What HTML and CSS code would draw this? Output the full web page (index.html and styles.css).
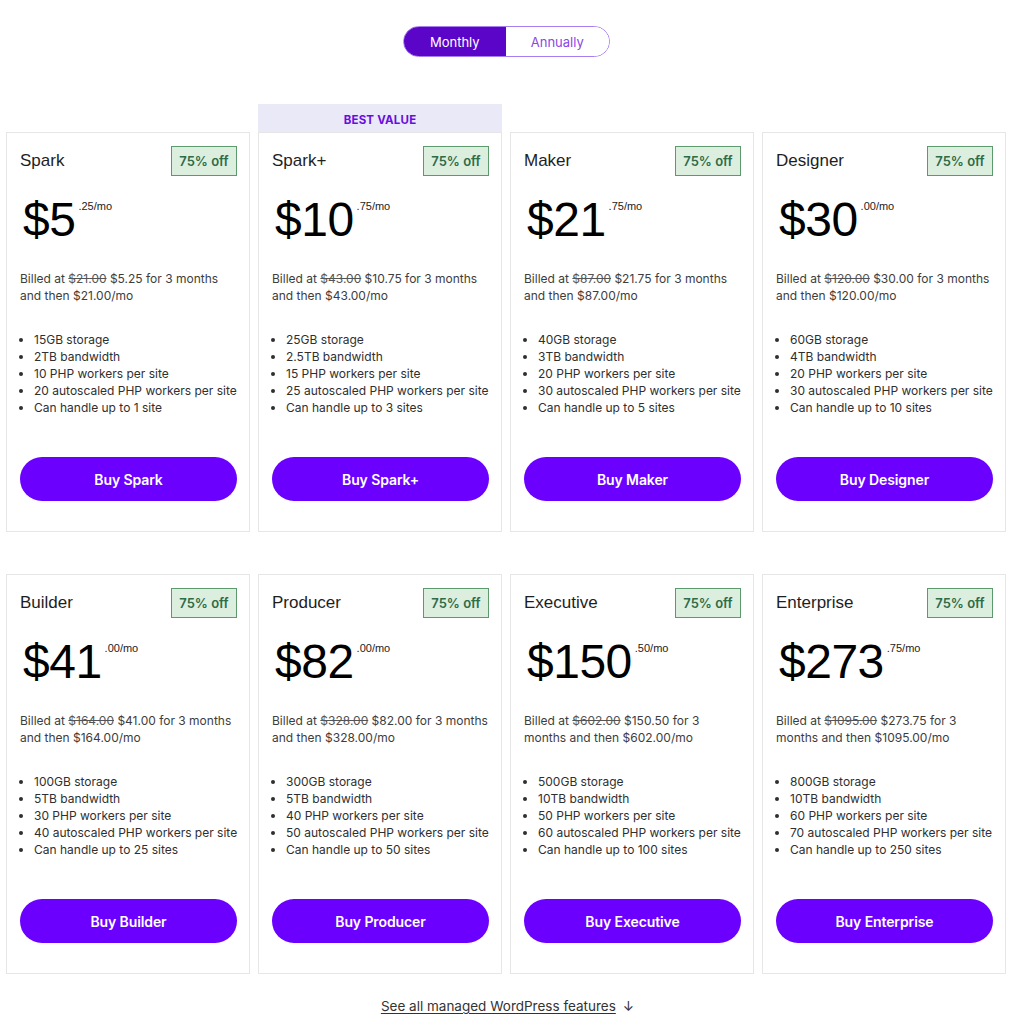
FILE: index.html
```html
<!DOCTYPE html>
<html lang="en">
<head>
<meta charset="utf-8">
<title>Plans</title>
<link rel="stylesheet" href="styles.css">
</head>
<body>
<div class="page">
  <div class="toggle-wrap">
    <div class="toggle">
      <button class="toggle-opt is-active">Monthly</button>
      <button class="toggle-opt">Annually</button>
    </div>
  </div>

  <div class="plans">
    <div class="plan">
      <div class="card">
        <div class="card-head"><h3 class="plan-name">Spark</h3><span class="badge">75% off</span></div>
        <div class="price"><span class="price-main">$5</span><span class="price-sup">.25/mo</span></div>
        <p class="billed">Billed at <s>$21.00</s> $5.25 for 3 months and then $21.00/mo</p>
        <ul class="features"><li>15GB storage</li><li>2TB bandwidth</li><li>10 PHP workers per site</li><li>20 autoscaled PHP workers per site</li><li>Can handle up to 1 site</li></ul>
        <button class="buy">Buy Spark</button>
      </div>
    </div>
    <div class="plan">
      <div class="best">BEST VALUE</div>
      <div class="card">
        <div class="card-head"><h3 class="plan-name">Spark+</h3><span class="badge">75% off</span></div>
        <div class="price"><span class="price-main">$10</span><span class="price-sup">.75/mo</span></div>
        <p class="billed">Billed at <s>$43.00</s> $10.75 for 3 months and then $43.00/mo</p>
        <ul class="features"><li>25GB storage</li><li>2.5TB bandwidth</li><li>15 PHP workers per site</li><li>25 autoscaled PHP workers per site</li><li>Can handle up to 3 sites</li></ul>
        <button class="buy">Buy Spark+</button>
      </div>
    </div>
    <div class="plan">
      <div class="card">
        <div class="card-head"><h3 class="plan-name">Maker</h3><span class="badge">75% off</span></div>
        <div class="price"><span class="price-main">$21</span><span class="price-sup">.75/mo</span></div>
        <p class="billed">Billed at <s>$87.00</s> $21.75 for 3 months and then $87.00/mo</p>
        <ul class="features"><li>40GB storage</li><li>3TB bandwidth</li><li>20 PHP workers per site</li><li>30 autoscaled PHP workers per site</li><li>Can handle up to 5 sites</li></ul>
        <button class="buy">Buy Maker</button>
      </div>
    </div>
    <div class="plan">
      <div class="card">
        <div class="card-head"><h3 class="plan-name">Designer</h3><span class="badge">75% off</span></div>
        <div class="price"><span class="price-main">$30</span><span class="price-sup">.00/mo</span></div>
        <p class="billed">Billed at <s>$120.00</s> $30.00 for 3 months and then $120.00/mo</p>
        <ul class="features"><li>60GB storage</li><li>4TB bandwidth</li><li>20 PHP workers per site</li><li>30 autoscaled PHP workers per site</li><li>Can handle up to 10 sites</li></ul>
        <button class="buy">Buy Designer</button>
      </div>
    </div>
    <div class="plan">
      <div class="card">
        <div class="card-head"><h3 class="plan-name">Builder</h3><span class="badge">75% off</span></div>
        <div class="price"><span class="price-main">$41</span><span class="price-sup">.00/mo</span></div>
        <p class="billed">Billed at <s>$164.00</s> $41.00 for 3 months and then $164.00/mo</p>
        <ul class="features"><li>100GB storage</li><li>5TB bandwidth</li><li>30 PHP workers per site</li><li>40 autoscaled PHP workers per site</li><li>Can handle up to 25 sites</li></ul>
        <button class="buy">Buy Builder</button>
      </div>
    </div>
    <div class="plan">
      <div class="card">
        <div class="card-head"><h3 class="plan-name">Producer</h3><span class="badge">75% off</span></div>
        <div class="price"><span class="price-main">$82</span><span class="price-sup">.00/mo</span></div>
        <p class="billed">Billed at <s>$328.00</s> $82.00 for 3 months and then $328.00/mo</p>
        <ul class="features"><li>300GB storage</li><li>5TB bandwidth</li><li>40 PHP workers per site</li><li>50 autoscaled PHP workers per site</li><li>Can handle up to 50 sites</li></ul>
        <button class="buy">Buy Producer</button>
      </div>
    </div>
    <div class="plan">
      <div class="card">
        <div class="card-head"><h3 class="plan-name">Executive</h3><span class="badge">75% off</span></div>
        <div class="price"><span class="price-main">$150</span><span class="price-sup">.50/mo</span></div>
        <p class="billed">Billed at <s>$602.00</s> $150.50 for 3 months and then $602.00/mo</p>
        <ul class="features"><li>500GB storage</li><li>10TB bandwidth</li><li>50 PHP workers per site</li><li>60 autoscaled PHP workers per site</li><li>Can handle up to 100 sites</li></ul>
        <button class="buy">Buy Executive</button>
      </div>
    </div>
    <div class="plan">
      <div class="card">
        <div class="card-head"><h3 class="plan-name">Enterprise</h3><span class="badge">75% off</span></div>
        <div class="price"><span class="price-main">$273</span><span class="price-sup">.75/mo</span></div>
        <p class="billed">Billed at <s>$1095.00</s> $273.75 for 3 months and then $1095.00/mo</p>
        <ul class="features"><li>800GB storage</li><li>10TB bandwidth</li><li>60 PHP workers per site</li><li>70 autoscaled PHP workers per site</li><li>Can handle up to 250 sites</li></ul>
        <button class="buy">Buy Enterprise</button>
      </div>
    </div>
  </div>

  <div class="more">
    <a class="more-link" href="#">See all managed WordPress features</a><span class="arrow">↓</span>
  </div>
</div>
</body>
</html>
```

FILE: styles.css
```css
* { box-sizing: border-box; }

body {
  margin: 0;
  background: #ffffff;
  font-family: Inter, "Noto Sans", sans-serif;
  color: #2c2c2c;
}

.page {
  padding: 26px 0 0 6px;
  width: 1015px;
}

.toggle-wrap {
  display: flex;
  justify-content: center;
  padding-right: 6px;
}

.toggle {
  display: flex;
  width: 207px;
  height: 31px;
  border: 1px solid #a77ef0;
  border-radius: 16px;
  overflow: hidden;
  margin-left: -3px;
}

.toggle-opt {
  flex: 1;
  border: 0;
  margin: 0;
  padding: 0;
  background: #ffffff;
  color: #8a48e6;
  font-family: Inter, sans-serif;
  font-size: 13px;
  cursor: pointer;
}

.toggle-opt.is-active {
  background: #5b05c9;
  color: #ffffff;
}

.plans {
  margin-top: 47px;
  width: 1000px;
  display: grid;
  grid-template-columns: repeat(4, 244px);
  column-gap: 8px;
  row-gap: 14px;
}

.plan {
  padding-top: 28px;
  position: relative;
}

.best {
  position: absolute;
  top: 0;
  left: 0;
  right: 0;
  height: 28px;
  padding-top: 3px;
  background: #e9e9f8;
  color: #6a0ddf;
  font-size: 11.5px;
  font-weight: 700;
  letter-spacing: 0.2px;
  display: flex;
  align-items: center;
  justify-content: center;
}

.card {
  border: 1px solid #e6e6e6;
  height: 400px;
  padding: 13px 12px 0 13px;
  display: flex;
  flex-direction: column;
}

.card-head {
  display: flex;
  align-items: center;
  justify-content: space-between;
  height: 30px;
}

.plan-name {
  margin: 0;
  font-family: "Liberation Sans", Arial, sans-serif;
  font-weight: 400;
  font-size: 17px;
  color: #1e1e1e;
}

.badge {
  width: 66px;
  height: 30px;
  border: 1px solid #5c9a6e;
  background: #dcefdf;
  color: #2e6b48;
  font-size: 13px;
  font-weight: 600;
  display: flex;
  align-items: center;
  justify-content: center;
}

.price {
  margin-top: 20px;
  display: flex;
  align-items: flex-start;
  font-family: "Liberation Sans", Arial, sans-serif;
  color: #000000;
}

.price-main {
  font-size: 48px;
  line-height: 48px;
  padding-left: 3px;
  letter-spacing: -0.5px;
}

.price-sup {
  font-size: 11px;
  line-height: 11px;
  margin-top: 5px;
  margin-left: 3px;
  color: #222;
}

.billed {
  margin: 26px 0 0 0;
  font-size: 12px;
  line-height: 17px;
  color: #3d3d3d;
}

.billed s {
  color: #555;
}

.features {
  margin: 27px -4px 0 0;
  padding-left: 14px;
  font-size: 12px;
  line-height: 17px;
  color: #2f2f2f;
}

.features li {
  white-space: nowrap;
}

.buy {
  margin-top: 41px;
  height: 44px;
  width: 100%;
  border: 0;
  border-radius: 22px;
  background: #6b00ff;
  color: #ffffff;
  font-family: Inter, sans-serif;
  font-size: 14px;
  font-weight: 600;
  letter-spacing: -0.1px;
  cursor: pointer;
}

.more {
  margin-top: 24px;
  text-align: center;
  padding-right: 6px;
  font-size: 13.5px;
  color: #333;
}

.more-link {
  color: #333;
  text-decoration: underline;
  text-underline-offset: 2px;
}

.arrow {
  margin-left: 7px;
}
```
